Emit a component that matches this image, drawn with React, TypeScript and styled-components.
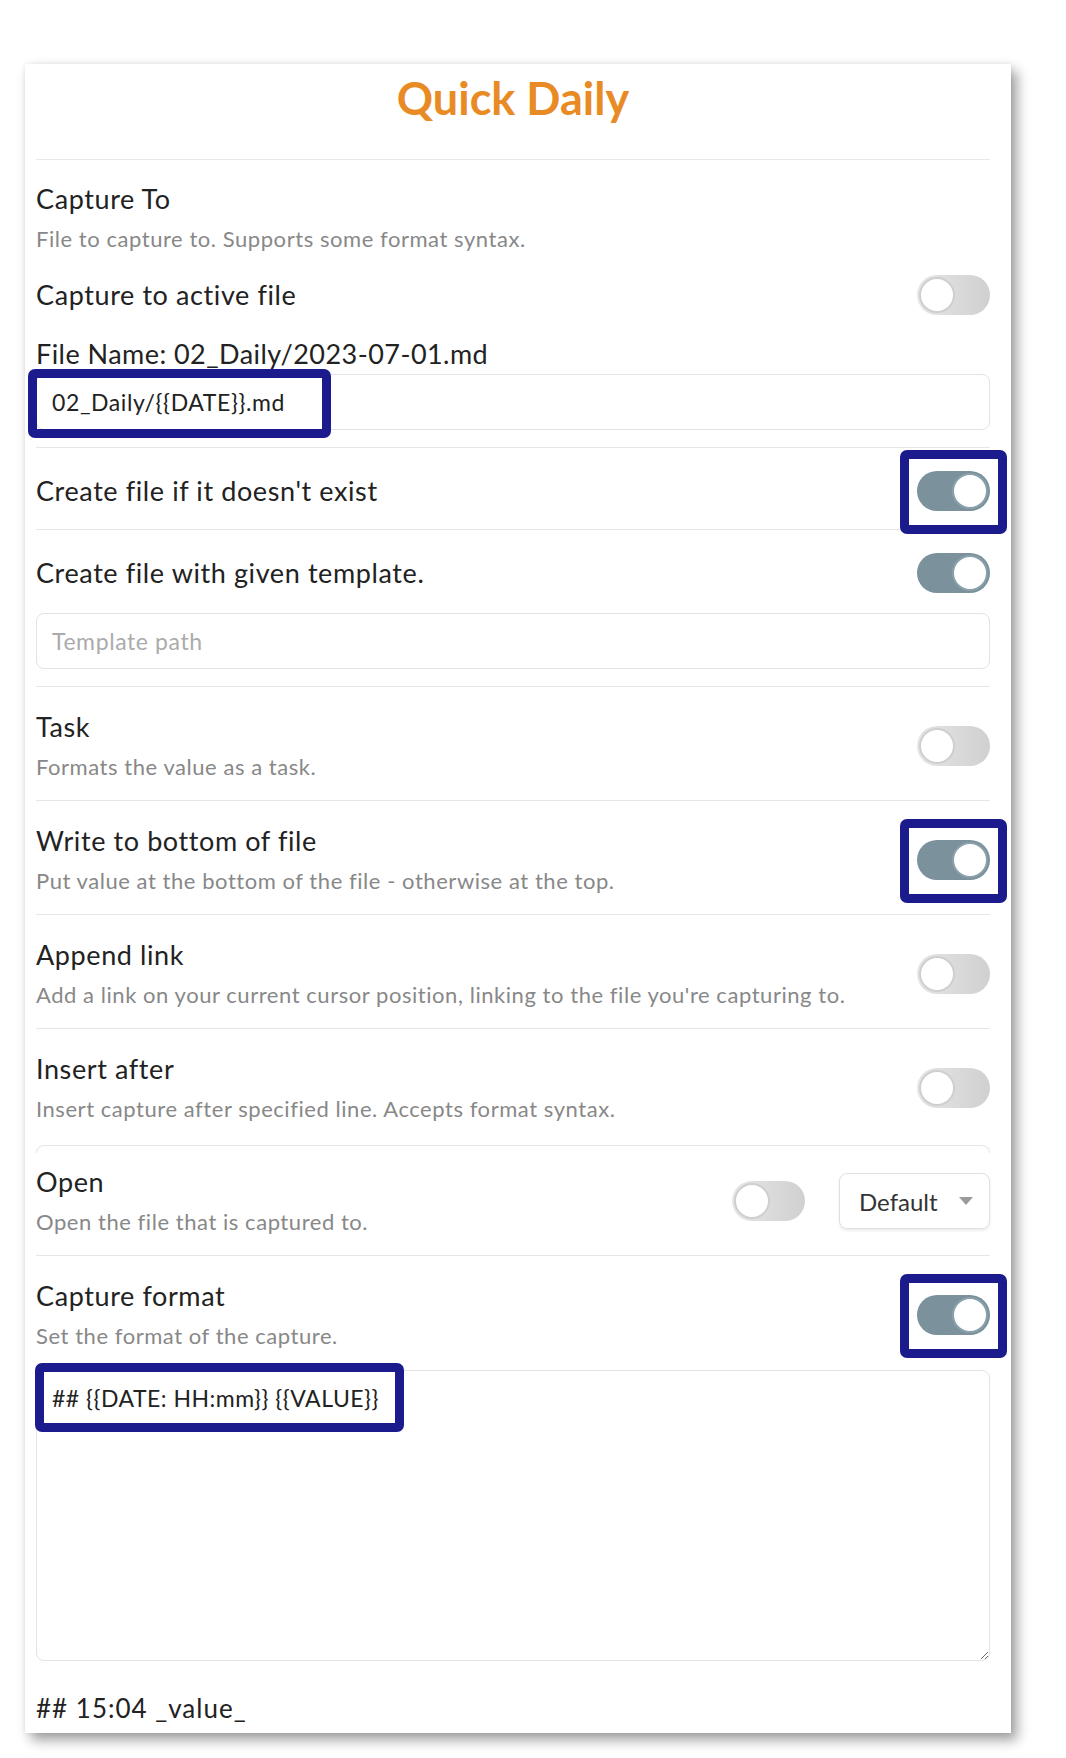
import React from "react";
import styled, { createGlobalStyle } from "styled-components";

const GlobalStyle = createGlobalStyle`
  *, *::before, *::after { box-sizing: border-box; }
  html, body { margin: 0; padding: 0; background: #ffffff; }
  body { font-family: Lato, "Noto Sans", sans-serif; color: #222; }
`;

const FONT = `Lato, "Noto Sans", sans-serif`;
const NAVY = "#1b1b8d";

const Page = styled.div`
  padding: 64px 0 23px 25px;
`;

const Card = styled.div`
  width: 986px;
  background: #fff;
  padding: 0 21px 9px 11px;
  box-shadow: 6px 7px 12px rgba(0, 0, 0, 0.38), 0 0 5px rgba(0, 0, 0, 0.08);
  display: flex;
  flex-direction: column;
`;

const Title = styled.h1`
  margin: 0;
  padding: 7px 0 34px;
  border-bottom: 1px solid #e8e8e8;
  text-align: center;
  font: 700 45px/54px ${FONT};
  color: #e98b25;
`;

const Section = styled.div<{ $pt?: number; $pb?: number; $border?: boolean }>`
  display: flex;
  flex-direction: column;
  padding-top: ${(p) => p.$pt ?? 22}px;
  padding-bottom: ${(p) => p.$pb ?? 17}px;
  border-top: ${(p) => (p.$border ? "1px solid #e6e6e6" : "none")};
`;

const Row = styled.div<{ $mt?: number }>`
  display: flex;
  align-items: center;
  justify-content: space-between;
  min-height: 42px;
  margin-top: ${(p) => p.$mt ?? 0}px;
`;

const Info = styled.div`
  display: flex;
  flex-direction: column;
`;

const Name = styled.div<{ $mt?: number }>`
  font: 400 27px/36px ${FONT};
  letter-spacing: 0.6px;
  color: #222;
  margin-top: ${(p) => p.$mt ?? 0}px;
`;

const Desc = styled.div`
  margin-top: 5px;
  font: 400 22px/33px ${FONT};
  letter-spacing: 0.55px;
  color: #888;
`;

const Controls = styled.div`
  display: flex;
  align-items: center;
  gap: 34px;
`;

const Track = styled.div<{ $on?: boolean }>`
  width: 73px;
  height: 40px;
  border-radius: 20px;
  padding: 2px;
  display: flex;
  justify-content: ${(p) => (p.$on ? "flex-end" : "flex-start")};
  background: ${(p) =>
    p.$on ? "#7b929d" : "linear-gradient(90deg, #e6e6e6, #d0d0d0)"};
`;

const Knob = styled.div<{ $on?: boolean }>`
  width: 36px;
  height: 36px;
  border-radius: 50%;
  background: #fff;
  border: 2px solid ${(p) => (p.$on ? "#8aa0aa" : "#cfcfcf")};
`;

const Toggle = ({ on }: { on?: boolean }) => (
  <Track $on={on}>
    <Knob $on={on} />
  </Track>
);

const Annotated = styled.div`
  position: relative;
  display: flex;
  flex-direction: column;
`;

const Mark = styled.div<{ $t: number; $l: number; $w: number; $h: number }>`
  position: absolute;
  top: ${(p) => p.$t}px;
  left: ${(p) => p.$l}px;
  width: ${(p) => p.$w}px;
  height: ${(p) => p.$h}px;
  border: 9px solid ${NAVY};
  border-radius: 7px;
  pointer-events: none;
`;

const TextInput = styled.input<{ $mt?: number }>`
  width: 100%;
  height: 56px;
  margin-top: ${(p) => p.$mt ?? 0}px;
  padding: 0 15px;
  border: 1px solid #e3e3e3;
  border-radius: 8px;
  background: #fff;
  font: 400 23px ${FONT};
  letter-spacing: 0.6px;
  color: #222;
  outline: none;
  &::placeholder { color: #ababab; }
`;

const TextArea = styled.textarea`
  width: 100%;
  height: 291px;
  margin-top: 18px;
  padding: 12px 15px;
  border: 1px solid #e3e3e3;
  border-radius: 8px;
  font: 400 23px/30px ${FONT};
  letter-spacing: 0.5px;
  color: #222;
  outline: none;
  resize: vertical;
  display: block;
`;

const CutEdge = styled.div`
  height: 8px;
  margin-bottom: -8px;
  border: 1px solid #e6e6e6;
  border-bottom: none;
  border-radius: 10px 10px 0 0;
`;

const Dropdown = styled.div`
  width: 151px;
  height: 56px;
  border: 1px solid #e0e0e0;
  border-radius: 8px;
  box-shadow: 0 2px 3px rgba(0, 0, 0, 0.08);
  display: flex;
  align-items: center;
  justify-content: space-between;
  padding: 0 16px 0 19px;
  font: 400 24px ${FONT};
  color: #333;
`;

const Caret = styled.span`
  width: 0;
  height: 0;
  border-left: 7px solid transparent;
  border-right: 7px solid transparent;
  border-top: 8px solid #9a9a9a;
`;

const Preview = styled.div`
  margin-top: 31px;
  font: 400 26px/32px ${FONT};
  letter-spacing: 1px;
  color: #222;
`;

const Field = ({
  name,
  desc,
  on,
  mark,
}: {
  name: string;
  desc?: string;
  on?: boolean;
  mark?: boolean;
}) => (
  <Row>
    <Info>
      <Name>{name}</Name>
      {desc && <Desc>{desc}</Desc>}
    </Info>
    <Annotated>
      <Toggle on={on} />
      {mark && <Mark $t={-21} $l={-17} $w={107} $h={84} />}
    </Annotated>
  </Row>
);

export default function App() {
  return (
    <>
      <GlobalStyle />
      <Page>
        <Card>
          <Title>Quick Daily</Title>

          <Section $pt={21} $pb={17}>
            <Name>Capture To</Name>
            <Desc>File to capture to. Supports some format syntax.</Desc>
            <Row $mt={19}>
              <Name>Capture to active file</Name>
              <Toggle />
            </Row>
            <Name $mt={20} style={{ letterSpacing: "0.45px" }}>
              File Name: 02_Daily/2023-07-01.md
            </Name>
            <Annotated>
              <TextInput $mt={2} readOnly value="02_Daily/{{DATE}}.md" />
              <Mark $t={-3} $l={-8} $w={303} $h={69} />
            </Annotated>
          </Section>

          <Section $border>
            <Field name="Create file if it doesn't exist" on mark />
          </Section>

          <Section $border>
            <Field name="Create file with given template." on />
            <TextInput $mt={19} readOnly placeholder="Template path" />
          </Section>

          <Section $border>
            <Field name="Task" desc="Formats the value as a task." />
          </Section>

          <Section $border>
            <Field
              name="Write to bottom of file"
              desc="Put value at the bottom of the file - otherwise at the top."
              on
              mark
            />
          </Section>

          <Section $border>
            <Field
              name="Append link"
              desc="Add a link on your current cursor position, linking to the file you're capturing to."
            />
          </Section>

          <Section $border $pb={20}>
            <Field
              name="Insert after"
              desc="Insert capture after specified line. Accepts format syntax."
            />
          </Section>

          <CutEdge />

          <Section $pt={19}>
            <Row>
              <Info>
                <Name>Open</Name>
                <Desc>Open the file that is captured to.</Desc>
              </Info>
              <Controls>
                <Toggle />
                <Dropdown>
                  Default
                  <Caret />
                </Dropdown>
              </Controls>
            </Row>
          </Section>

          <Section $border $pb={0}>
            <Field
              name="Capture format"
              desc="Set the format of the capture."
              on
              mark
            />
            <Annotated>
              <TextArea readOnly value="## {{DATE: HH:mm}} {{VALUE}}" />
              <Mark $t={11} $l={-1} $w={369} $h={69} />
            </Annotated>
          </Section>

          <Preview>## 15:04 _value_</Preview>
        </Card>
      </Page>
    </>
  );
}
